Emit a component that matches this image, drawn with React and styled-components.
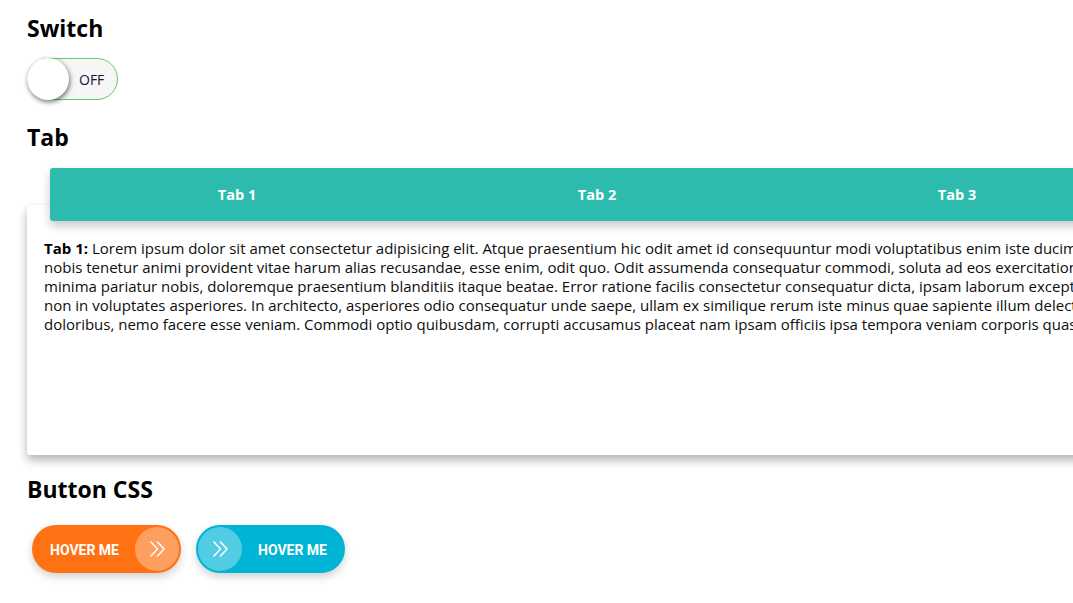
import React from "react";
import styled, { createGlobalStyle } from "styled-components";

const Global = createGlobalStyle`
  html, body { margin: 0; padding: 0; background: #fff; overflow-x: hidden; }
  body { font-family: "Open Sans", "Noto Sans", sans-serif; color: #111; }
`;

const Page = styled.div`
  padding: 12px 0 30px 27px;
  display: flex;
  flex-direction: column;
  align-items: flex-start;
`;

const Title = styled.h2`
  margin: ${(p) => p.$mt || 0}px 0 0 0;
  font-size: 23px;
  line-height: 32px;
  font-weight: 700;
  color: #000;
`;

const SwitchTrack = styled.div`
  margin-top: 14px;
  width: 91px;
  height: 42px;
  box-sizing: border-box;
  border: 1px solid #5ccf6b;
  border-radius: 21px;
  background: #f6f6f6;
  display: flex;
  align-items: center;
  position: relative;
`;

const Knob = styled.span`
  position: absolute;
  left: -1px;
  top: -1px;
  width: 42px;
  height: 42px;
  border-radius: 50%;
  background: #fff;
  box-shadow: 1px 2px 5px rgba(0, 0, 0, 0.55);
`;

const SwitchLabel = styled.span`
  margin-left: 51px;
  font-size: 14px;
  color: #2a1030;
`;

const Tabs = styled.div`
  margin-top: 15px;
  display: flex;
  flex-direction: column;
`;

const TabBar = styled.div`
  position: relative;
  z-index: 1;
  margin-left: 23px;
  margin-bottom: -16px;
  width: 1200px;
  height: 53px;
  padding-left: 7px;
  box-sizing: border-box;
  background: #2cbbad;
  border-radius: 3px;
  box-shadow: 0 5px 10px rgba(0, 0, 0, 0.22);
  display: flex;
`;

const Tab = styled.div`
  width: 360px;
  flex: none;
  display: flex;
  align-items: center;
  justify-content: center;
  color: #fff;
  font-weight: 700;
  font-size: 14.5px;
`;

const Panel = styled.div`
  width: 1300px;
  height: 250px;
  box-sizing: border-box;
  padding: 34px 17px 0;
  background: #fff;
  border-radius: 3px;
  box-shadow: 0 5px 10px rgba(0, 0, 0, 0.3);
`;

const Text = styled.p`
  margin: 0;
  font-size: 15px;
  line-height: 19px;
  white-space: nowrap;
  color: #0d0d0d;
  b { font-weight: 700; color: #000; }
`;

const Buttons = styled.div`
  margin-top: 20px;
  margin-left: 5px;
  display: flex;
  gap: 15px;
`;

const HoverButton = styled.button`
  width: 149px;
  height: 48px;
  border: none;
  border-radius: 24px;
  padding: 0 2px;
  background: ${(p) => p.$bg};
  box-shadow: 0 4px 8px rgba(0, 0, 0, 0.18);
  display: flex;
  flex-direction: ${(p) => (p.$iconLeft ? "row-reverse" : "row")};
  align-items: center;
  justify-content: space-between;
  cursor: pointer;
  font-family: Roboto, "Liberation Sans", sans-serif;
`;

const ButtonText = styled.span`
  flex: 1;
  text-align: center;
  color: #fff;
  font-weight: 700;
  font-size: 14px;
  padding-top: 2px;
`;

const IconCircle = styled.span`
  width: 44px;
  height: 44px;
  border-radius: 50%;
  background: rgba(255, 255, 255, 0.32);
  display: flex;
  align-items: center;
  justify-content: center;
  flex: none;
`;

const Chevrons = () => (
  <svg width="17" height="16" viewBox="0 0 17 16" fill="none" stroke="#fff" strokeWidth="1.5" strokeLinecap="round" strokeLinejoin="round">
    <polyline points="2,1 8.5,8 2,15" />
    <polyline points="8.5,1 15,8 8.5,15" />
  </svg>
);

export default function App() {
  return (
    <>
      <Global />
      <Page>
        <Title>Switch</Title>
        <SwitchTrack>
          <Knob />
          <SwitchLabel>OFF</SwitchLabel>
        </SwitchTrack>
        <Title $mt={21}>Tab</Title>
        <Tabs>
          <TabBar>
            <Tab>Tab 1</Tab>
            <Tab>Tab 2</Tab>
            <Tab>Tab 3</Tab>
          </TabBar>
          <Panel>
            <Text>
              <b>Tab 1:</b> Lorem ipsum dolor sit amet consectetur adipisicing elit. Atque praesentium hic odit amet id consequuntur modi voluptatibus enim iste ducimus voluptate,
              <br />
              nobis tenetur animi provident vitae harum alias recusandae, esse enim, odit quo. Odit assumenda consequatur commodi, soluta ad eos exercitationem quis,
              <br />
              minima pariatur nobis, doloremque praesentium blanditiis itaque beatae. Error ratione facilis consectetur consequatur dicta, ipsam laborum excepturi quas
              <br />
              non in voluptates asperiores. In architecto, asperiores odio consequatur unde saepe, ullam ex similique rerum iste minus quae sapiente illum delectus,
              <br />
              doloribus, nemo facere esse veniam. Commodi optio quibusdam, corrupti accusamus placeat nam ipsam officiis ipsa tempora veniam corporis quas.
            </Text>
          </Panel>
        </Tabs>
        <Title $mt={18}>Button CSS</Title>
        <Buttons>
          <HoverButton $bg="#ff7214">
            <ButtonText>HOVER ME</ButtonText>
            <IconCircle>
              <Chevrons />
            </IconCircle>
          </HoverButton>
          <HoverButton $bg="#00b4d6" $iconLeft>
            <ButtonText>HOVER ME</ButtonText>
            <IconCircle>
              <Chevrons />
            </IconCircle>
          </HoverButton>
        </Buttons>
      </Page>
    </>
  );
}
